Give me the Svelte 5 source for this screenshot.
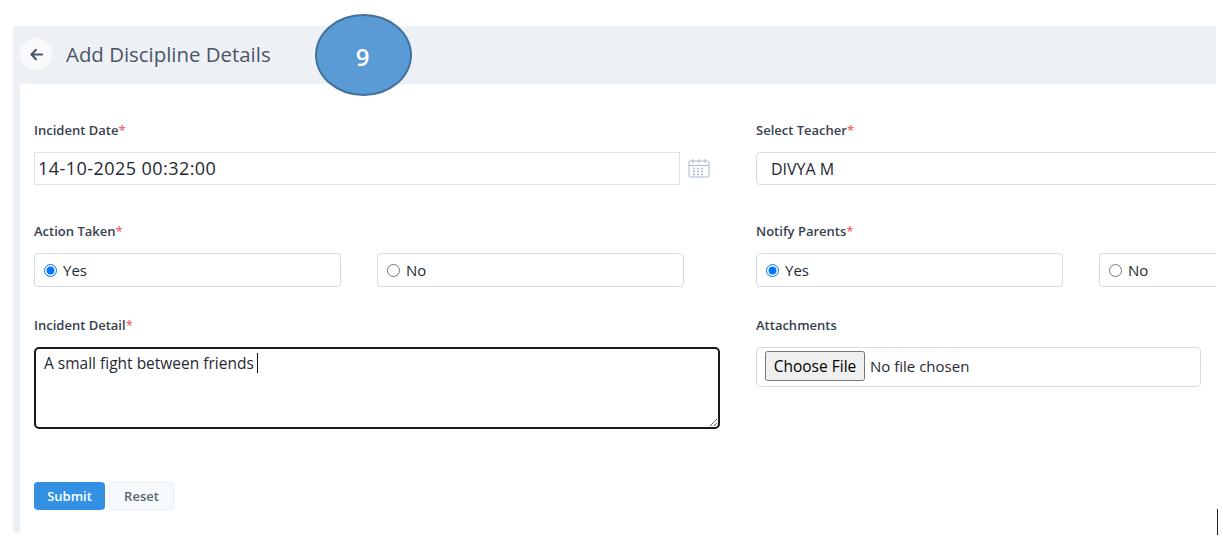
<script>
  let actionTaken = $state('yes');
  let notifyParents = $state('yes');
  let detail = $state('A small fight between friends');
</script>

<div class="page">
  <div class="panel">
    <header class="head">
      <button class="back" type="button" aria-label="Back">
        <svg viewBox="0 0 16 16" width="15" height="15" fill="none" stroke="#4a5568" stroke-width="2.2" stroke-linecap="round" stroke-linejoin="round">
          <path d="M14 8H2.500M7.500 3 2.500 8l5 5" />
        </svg>
      </button>
      <h1>Add Discipline Details</h1>
    </header>

    <form class="card" onsubmit={(e) => e.preventDefault()}>
      <div class="grid">
        <div class="field">
          <span class="label">Incident Date<i>*</i></span>
          <div class="date-row">
            <input class="date" type="text" value="14-10-2025 00:32:00" />
            <svg class="cal" viewBox="0 0 22 20" width="22" height="20" fill="none" stroke="#a9b8cc" stroke-width="1">
              <rect x="1" y="3" width="20" height="16" rx="1.500" />
              <path d="M1 7.500h20M5 1v4M11 1v4M17 1v4" />
              <path stroke-width="1.600" stroke-dasharray="2 2" d="M5 10.500h12M5 13.500h12M5 16.500h12" />
            </svg>
          </div>
        </div>
        <div class="field">
          <span class="label">Select Teacher<i>*</i></span>
          <div class="select">DIVYA M</div>
        </div>

        <div class="field">
          <span class="label">Action Taken<i>*</i></span>
          <div class="radios">
            <label class="radio"><input type="radio" name="action" value="yes" bind:group={actionTaken} />Yes</label>
            <label class="radio"><input type="radio" name="action" value="no" bind:group={actionTaken} />No</label>
          </div>
        </div>
        <div class="field">
          <span class="label">Notify Parents<i>*</i></span>
          <div class="radios">
            <label class="radio"><input type="radio" name="notify" value="yes" bind:group={notifyParents} />Yes</label>
            <label class="radio"><input type="radio" name="notify" value="no" bind:group={notifyParents} />No</label>
          </div>
        </div>

        <div class="field">
          <span class="label">Incident Detail<i>*</i></span>
          <div class="area-wrap">
            <textarea bind:value={detail}></textarea>
            <span class="caret"></span>
          </div>
        </div>
        <div class="field">
          <span class="label">Attachments</span>
          <div class="file"><input type="file" /></div>
        </div>
      </div>

      <div class="actions">
        <button class="submit" type="submit">Submit</button>
        <button class="reset" type="reset">Reset</button>
      </div>
    </form>
  </div>

  <div class="step">9</div>
  <span class="stray"></span>
</div>

<style>
  :global(body) {
    margin: 0;
    background: #fff;
  }

  .page {
    position: relative;
    width: 1223px;
    height: 556px;
    padding: 26px 7px 23px 13px;
    box-sizing: border-box;
    overflow: hidden;
    font-family: "Open Sans", "Noto Sans", sans-serif;
    color: #1f2933;
  }

  .panel {
    display: flex;
    flex-direction: column;
    height: 100%;
    background: #edf1f5;
  }

  .head {
    display: flex;
    align-items: center;
    gap: 14px;
    height: 58px;
    flex-shrink: 0;
    padding: 0 0 3px 7px;
    box-sizing: border-box;
  }

  .back {
    display: flex;
    align-items: center;
    justify-content: center;
    width: 32px;
    height: 32px;
    margin-top: 1px;
    padding: 0;
    border: 0;
    border-radius: 50%;
    background: #f8fafc;
  }

  h1 {
    margin: 0;
    font-size: 20.400px;
    font-weight: 400;
    color: #4a5568;
  }

  .card {
    flex: 1;
    margin-left: 7px;
    padding: 39px 0 0 14px;
    background: #fff;
    overflow: hidden;
  }

  .grid {
    display: grid;
    grid-template-columns: 722px 700px;
    grid-template-rows: 101px 94px 164px;
  }

  .label {
    display: block;
    height: 15px;
    margin-bottom: 14px;
    font-size: 13px;
    line-height: 15px;
    font-weight: 600;
    color: #36404f;
  }

  .label i {
    font-style: normal;
    color: #f56565;
  }

  .date-row {
    display: flex;
    align-items: center;
    gap: 9px;
  }

  .date {
    width: 646px;
    height: 33px;
    box-sizing: border-box;
    padding: 0 3px 2px;
    border: 1px solid #dfe3e8;
    font: inherit;
    font-size: 18px;
    letter-spacing: 0.450px;
    color: #1f2933;
    outline: none;
  }

  .cal {
    margin: -2px 0 0 -1px;
  }

  .select {
    display: flex;
    align-items: center;
    height: 33px;
    box-sizing: border-box;
    padding-left: 14px;
    border: 1px solid #d3dde9;
    border-radius: 4px;
    font-size: 16px;
  }

  .radios {
    display: flex;
    gap: 36px;
    margin-top: 2px;
  }

  .radio {
    display: flex;
    align-items: center;
    flex-shrink: 0;
    gap: 6px;
    width: 307px;
    height: 34px;
    box-sizing: border-box;
    padding-left: 9px;
    border: 1px solid #d3dde9;
    border-radius: 4px;
    font-size: 15px;
  }

  .radio input {
    width: 13px;
    height: 13px;
    margin: 0;
  }

  .area-wrap {
    position: relative;
    width: 686px;
    height: 82px;
  }

  textarea {
    display: block;
    width: 100%;
    height: 100%;
    box-sizing: border-box;
    padding: 3px 8px;
    border: 2px solid #16191d;
    border-radius: 5px;
    font: inherit;
    font-size: 15.500px;
    line-height: 22px;
    color: #1f2933;
    outline: none;
  }

  .caret {
    position: absolute;
    left: 223px;
    top: 6px;
    width: 1px;
    height: 20px;
    background: #111;
  }

  .file {
    display: flex;
    align-items: center;
    width: 445px;
    height: 40px;
    box-sizing: border-box;
    padding: 0 0 2px 8px;
    border: 1px solid #d3dde9;
    border-radius: 4px;
  }

  .file input {
    font-family: inherit;
    font-size: 15px;
    color: #1f2933;
  }

  .file input::file-selector-button {
    width: 100px;
    height: 30px;
    margin-right: 5px;
    padding: 0;
    font-family: inherit;
    font-size: 15.500px;
  }

  .actions {
    display: flex;
    gap: 4px;
  }

  .actions button {
    height: 28px;
    border-radius: 4px;
    font-family: inherit;
    font-size: 13px;
    font-weight: 600;
    padding: 0;
  }

  .submit {
    width: 71px;
    border: 0;
    background: #3490e3;
    color: #fff;
  }

  .reset {
    width: 65px;
    border: 1px solid #e6edf5;
    background: #f7fafc;
    color: #5a6472;
  }

  .step {
    position: absolute;
    left: 315px;
    top: 14px;
    display: flex;
    align-items: center;
    justify-content: center;
    width: 97px;
    height: 82px;
    padding: 2px 2px 0 0;
    box-sizing: border-box;
    border: 2px solid #41719c;
    border-radius: 50%;
    background: #5b9bd5;
    color: #fff;
    font-size: 24px;
    font-weight: 600;
  }

  .stray {
    position: absolute;
    left: 1217px;
    top: 509px;
    width: 1px;
    height: 26px;
    background: #222;
  }
</style>
